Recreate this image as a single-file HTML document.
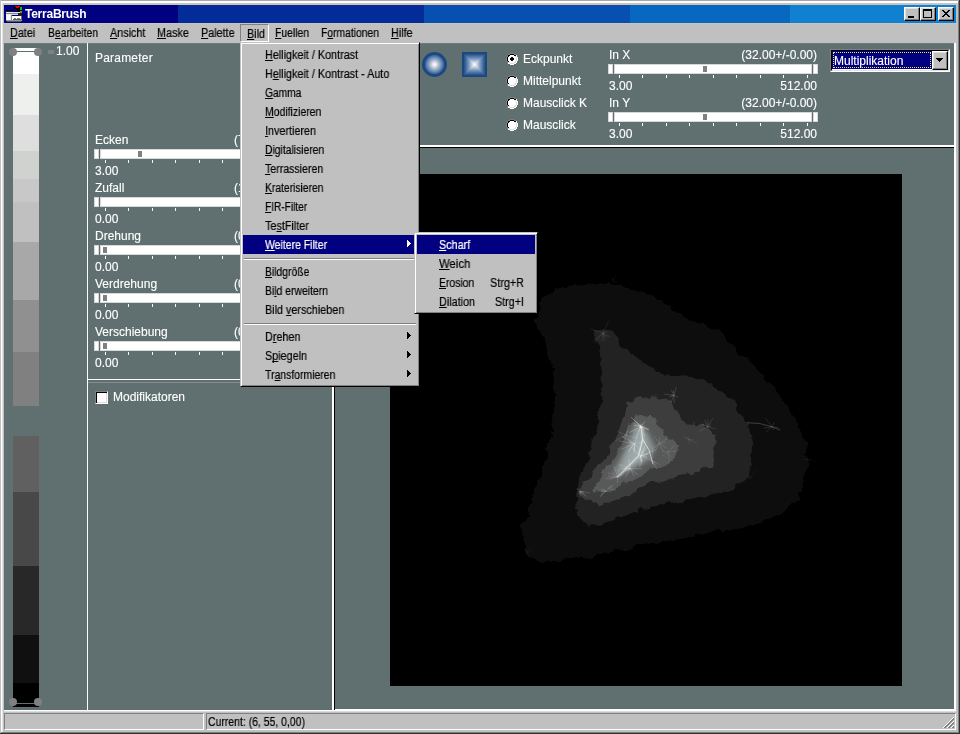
<!DOCTYPE html>
<html lang="de"><head><meta charset="utf-8"><title>TerraBrush</title>
<style>
html,body{margin:0;padding:0}
body{width:960px;height:734px;overflow:hidden;position:relative;background:#c0c0c0;font-family:"Liberation Sans",sans-serif;font-size:12px;color:#000}
div,span{position:absolute;box-sizing:border-box;white-space:nowrap}
.bg{background:#607070}
.t{color:#fff;font-size:12px;line-height:14px;height:14px;-webkit-text-stroke:.12px #fff;will-change:transform}
.r{text-align:right}
.m{font-size:12px;line-height:14px;height:14px;color:#000;transform:scaleX(.9);transform-origin:0 0;will-change:transform;-webkit-text-stroke:.2px}
.m u{text-decoration:underline;text-underline-offset:1px;text-decoration-thickness:1px;text-decoration-skip-ink:none}
.mw{color:#fff}
.mr{transform-origin:100% 0;text-align:right}
.trk{background:#fff;border:1px solid #d4d8d8;height:10px}
.tick{width:1px;height:3px;background:#fff}
.thumb{width:4px;height:6px;background:#808080}
.btn{background:#c0c0c0;border:1px solid;border-color:#fff #000 #000 #fff;box-shadow:inset -1px -1px 0 #808080,inset 1px 1px 0 #dfdfdf}
.radio{width:12px;height:12px;border-radius:50%;background:#fff;box-shadow:inset 1px 1px 0 1px #404040, inset -1px -1px 0 0 #dfdfdf;border:0}
</style></head><body>

<div style="left:0px;top:0px;width:960px;height:1px;background:#a8a8a8"></div>
<div style="left:0px;top:1px;width:959px;height:2px;background:#fff"></div>
<div style="left:0px;top:2px;width:959px;height:1px;background:#fff"></div>
<div style="left:0px;top:3px;width:959px;height:2px;background:#c8c4c0"></div>
<div style="left:0px;top:0px;width:1px;height:734px;background:#c0c0c0"></div>
<div style="left:1px;top:1px;width:1px;height:731px;background:#fff"></div>
<div style="left:2px;top:2px;width:1px;height:730px;background:#e4e4e4"></div>
<div style="left:958px;top:1px;width:1px;height:732px;background:#808080"></div>
<div style="left:959px;top:0px;width:1px;height:734px;background:#303030"></div>
<div style="left:1px;top:732px;width:958px;height:1px;background:#808080"></div>
<div style="left:0px;top:733px;width:960px;height:1px;background:#303030"></div>
<div style="left:4px;top:5px;width:174px;height:18px;background:#000080"></div>
<div style="left:178px;top:5px;width:246px;height:18px;background:#042c98"></div>
<div style="left:424px;top:5px;width:206px;height:18px;background:#0850b0"></div>
<div style="left:630px;top:5px;width:160px;height:18px;background:#0868c0"></div>
<div style="left:790px;top:5px;width:166px;height:18px;background:#1080d0"></div>
<div style="left:4px;top:23px;width:952px;height:1px;background:#c8c4c0"></div>
<svg style="position:absolute;left:6px;top:6px" width="16" height="16" viewBox="0 0 16 16" shape-rendering="crispEdges">
<rect x="8" y="0" width="6" height="3" fill="#000"/>
<rect x="11" y="2" width="3" height="4" fill="#000"/>
<rect x="9" y="0" width="5" height="1" fill="#e80000"/>
<rect x="10" y="1" width="3" height="1" fill="#e80000"/>
<rect x="14" y="1" width="2" height="3" fill="#00c800"/>
<rect x="14" y="4" width="2" height="1" fill="#000"/>
<rect x="14" y="5" width="2" height="2" fill="#8a8428"/>
<rect x="0" y="4" width="8" height="1" fill="#000"/>
<rect x="0" y="5" width="8" height="1" fill="#101060"/>
<rect x="0" y="6" width="14" height="1" fill="#e4e4e4"/>
<rect x="0" y="7" width="14" height="1" fill="#80908c"/>
<rect x="0" y="8" width="16" height="7" fill="#d4d8d4"/>
<rect x="12" y="7" width="4" height="3" fill="#202020"/>
<rect x="0" y="8" width="5" height="6" fill="#e8e8e8"/>
<rect x="1" y="9" width="3" height="5" fill="#f8f8f8"/>
<rect x="5" y="9" width="1" height="6" fill="#909090"/>
<rect x="6" y="9" width="7" height="1" fill="#000080"/>
<rect x="6" y="10" width="10" height="4" fill="#fff"/>
<rect x="8" y="12" width="2" height="1" fill="#808080"/>
<rect x="11" y="12" width="3" height="1" fill="#808080"/>
<rect x="7" y="13" width="8" height="1" fill="#585858"/>
<rect x="15" y="10" width="1" height="5" fill="#707058"/>
<rect x="0" y="14" width="16" height="1" fill="#90a098"/>
<rect x="1" y="15" width="14" height="1" fill="#485868"/>
</svg>
<div style="left:25px;top:6px;color:#fff;font-weight:bold;font-size:12px;letter-spacing:-.25px;line-height:16px;height:16px;will-change:transform">TerraBrush</div>
<div class="btn" style="left:904px;top:7px;width:16px;height:14px;"><div style="left:3px;top:8px;width:6px;height:2px;background:#000"></div></div>
<div class="btn" style="left:920px;top:7px;width:16px;height:14px;"><div style="left:2px;top:1px;width:9px;height:9px;border:1px solid #000;border-top-width:2px"></div></div>
<div class="btn" style="left:938px;top:7px;width:16px;height:14px"><svg style="position:absolute;left:3px;top:2px" width="8" height="7" viewBox="0 0 8 7" shape-rendering="crispEdges"><path d="M0 0h2v1h1v1h2v-1h1v-1h2v1h-1v1h-1v1h-1v1h1v1h1v1h1v1h-2v-1h-1v-1h-2v1h-1v1h-2v-1h1v-1h1v-1h1v-1h-1v-1h-1v-1h-1z" fill="#000"/></svg></div>
<div style="left:240px;top:24px;width:29px;height:18px;border:1px solid;border-color:#808080 #fff #fff #808080"></div>
<div class="m" style="left:10px;top:26px"><u>D</u>atei</div>
<div class="m" style="left:48px;top:26px;transform:scaleX(0.8604)">B<u>e</u>arbeiten</div>
<div class="m" style="left:110px;top:26px"><u>A</u>nsicht</div>
<div class="m" style="left:157px;top:26px"><u>M</u>aske</div>
<div class="m" style="left:201px;top:26px"><u>P</u>alette</div>
<div class="m" style="left:247px;top:27px"><u>B</u>ild</div>
<div class="m" style="left:275px;top:26px;transform:scaleX(0.8644)"><u>F</u>uellen</div>
<div class="m" style="left:321px;top:26px;transform:scaleX(0.8600)">F<u>o</u>rmationen</div>
<div class="m" style="left:391px;top:26px"><u>H</u>ilfe</div>
<div class="bg" style="left:4px;top:43px;width:84px;height:669px;"></div>
<div style="left:4px;top:43px;width:83px;height:1px;background:#6c7c7c"></div>
<div style="left:87px;top:43px;width:1px;height:669px;background:#fff"></div>
<div class="bg" style="left:88px;top:43px;width:246px;height:669px;"></div>
<div style="left:88px;top:43px;width:244px;height:1px;background:#6c7c7c"></div>
<div style="left:88px;top:379px;width:244px;height:1px;background:#fff"></div>
<div style="left:88px;top:382px;width:244px;height:1px;background:#848e8e"></div>
<div style="left:332px;top:43px;width:2px;height:669px;background:#fff"></div>
<div style="left:334px;top:43px;width:1px;height:669px;background:#000"></div>
<div class="bg" style="left:335px;top:43px;width:621px;height:669px;"></div>
<div style="left:335px;top:43px;width:619px;height:1px;background:#6c7c7c"></div>
<div style="left:335px;top:145px;width:619px;height:2px;background:#fff"></div>
<div style="left:335px;top:147px;width:619px;height:1px;background:#000"></div>
<div style="left:954px;top:43px;width:2px;height:669px;background:#fff"></div>
<div style="left:4px;top:710px;width:952px;height:1px;background:#fff"></div>
<div style="left:4px;top:711px;width:952px;height:1px;background:#dcdcdc"></div>
<div style="left:335px;top:709px;width:621px;height:1px;background:#fff"></div>
<div style="left:13px;top:48px;width:26px;height:26px;background:#ffffff"></div>
<div style="left:13px;top:74px;width:26px;height:41px;background:#eef0ee"></div>
<div style="left:13px;top:115px;width:26px;height:36px;background:#dedede"></div>
<div style="left:13px;top:151px;width:26px;height:28px;background:#d0d2d0"></div>
<div style="left:13px;top:179px;width:26px;height:23px;background:#c8c8c8"></div>
<div style="left:13px;top:202px;width:26px;height:40px;background:#c0c0c0"></div>
<div style="left:13px;top:242px;width:26px;height:58px;background:#a8a8a8"></div>
<div style="left:13px;top:300px;width:26px;height:52px;background:#909090"></div>
<div style="left:13px;top:352px;width:26px;height:54px;background:#808080"></div>
<div style="left:13px;top:436px;width:26px;height:56px;background:#606060"></div>
<div style="left:13px;top:492px;width:26px;height:74px;background:#484848"></div>
<div style="left:13px;top:566px;width:26px;height:69px;background:#282828"></div>
<div style="left:13px;top:635px;width:26px;height:48px;background:#101010"></div>
<div style="left:13px;top:683px;width:26px;height:24px;background:#000000"></div>
<div class="bg" style="left:13px;top:51px;width:26px;height:1px;"></div>
<div class="bg" style="left:13px;top:703px;width:26px;height:1px;"></div>
<div style="left:9px;top:48px;width:8px;height:8px;background:#808080;border-radius:50%"></div>
<div style="left:34px;top:48px;width:8px;height:8px;background:#808080;border-radius:50%"></div>
<div style="left:9px;top:698px;width:8px;height:8px;background:#808080;border-radius:50%"></div>
<div style="left:34px;top:698px;width:8px;height:8px;background:#808080;border-radius:50%"></div>
<div style="left:48px;top:50px;width:6px;height:4px;background:#808080"></div>
<div class="t" style="left:56px;top:44px">1.00</div>
<div class="t" style="left:95px;top:51px;letter-spacing:.2px">Parameter</div>
<div class="t" style="left:95px;top:133px">Ecken</div>
<div class="trk" style="left:94px;top:149px;width:5px;height:10px;"></div>
<div class="trk" style="left:100px;top:149px;width:220px;height:10px;"></div>
<div class="trk" style="left:321px;top:149px;width:5px;height:10px;"></div>
<div class="thumb" style="left:138px;top:151px;width:4px;height:6px;"></div>
<div class="tick" style="left:105px;top:160px;width:1px;height:3px;"></div>
<div class="tick" style="left:128px;top:160px;width:1px;height:3px;"></div>
<div class="tick" style="left:152px;top:160px;width:1px;height:3px;"></div>
<div class="tick" style="left:175px;top:160px;width:1px;height:3px;"></div>
<div class="tick" style="left:199px;top:160px;width:1px;height:3px;"></div>
<div class="tick" style="left:222px;top:160px;width:1px;height:3px;"></div>
<div class="tick" style="left:246px;top:160px;width:1px;height:3px;"></div>
<div class="tick" style="left:269px;top:160px;width:1px;height:3px;"></div>
<div class="tick" style="left:293px;top:160px;width:1px;height:3px;"></div>
<div class="t" style="left:95px;top:164px">3.00</div>
<div class="t" style="left:234px;top:133px">(7</div>
<div class="t" style="left:95px;top:181px">Zufall</div>
<div class="trk" style="left:94px;top:197px;width:5px;height:10px;"></div>
<div class="trk" style="left:100px;top:197px;width:220px;height:10px;"></div>
<div class="trk" style="left:321px;top:197px;width:5px;height:10px;"></div>
<div class="tick" style="left:105px;top:208px;width:1px;height:3px;"></div>
<div class="tick" style="left:128px;top:208px;width:1px;height:3px;"></div>
<div class="tick" style="left:152px;top:208px;width:1px;height:3px;"></div>
<div class="tick" style="left:175px;top:208px;width:1px;height:3px;"></div>
<div class="tick" style="left:199px;top:208px;width:1px;height:3px;"></div>
<div class="tick" style="left:222px;top:208px;width:1px;height:3px;"></div>
<div class="tick" style="left:246px;top:208px;width:1px;height:3px;"></div>
<div class="tick" style="left:269px;top:208px;width:1px;height:3px;"></div>
<div class="tick" style="left:293px;top:208px;width:1px;height:3px;"></div>
<div class="t" style="left:95px;top:212px">0.00</div>
<div class="t" style="left:234px;top:181px">(1</div>
<div class="t" style="left:95px;top:229px">Drehung</div>
<div class="trk" style="left:94px;top:245px;width:5px;height:10px;"></div>
<div class="trk" style="left:100px;top:245px;width:220px;height:10px;"></div>
<div class="trk" style="left:321px;top:245px;width:5px;height:10px;"></div>
<div class="thumb" style="left:103px;top:247px;width:4px;height:6px;"></div>
<div class="tick" style="left:105px;top:256px;width:1px;height:3px;"></div>
<div class="tick" style="left:128px;top:256px;width:1px;height:3px;"></div>
<div class="tick" style="left:152px;top:256px;width:1px;height:3px;"></div>
<div class="tick" style="left:175px;top:256px;width:1px;height:3px;"></div>
<div class="tick" style="left:199px;top:256px;width:1px;height:3px;"></div>
<div class="tick" style="left:222px;top:256px;width:1px;height:3px;"></div>
<div class="tick" style="left:246px;top:256px;width:1px;height:3px;"></div>
<div class="tick" style="left:269px;top:256px;width:1px;height:3px;"></div>
<div class="tick" style="left:293px;top:256px;width:1px;height:3px;"></div>
<div class="t" style="left:95px;top:260px">0.00</div>
<div class="t" style="left:234px;top:229px">(0</div>
<div class="t" style="left:95px;top:277px">Verdrehung</div>
<div class="trk" style="left:94px;top:293px;width:5px;height:10px;"></div>
<div class="trk" style="left:100px;top:293px;width:220px;height:10px;"></div>
<div class="trk" style="left:321px;top:293px;width:5px;height:10px;"></div>
<div class="thumb" style="left:103px;top:295px;width:4px;height:6px;"></div>
<div class="tick" style="left:105px;top:304px;width:1px;height:3px;"></div>
<div class="tick" style="left:128px;top:304px;width:1px;height:3px;"></div>
<div class="tick" style="left:152px;top:304px;width:1px;height:3px;"></div>
<div class="tick" style="left:175px;top:304px;width:1px;height:3px;"></div>
<div class="tick" style="left:199px;top:304px;width:1px;height:3px;"></div>
<div class="tick" style="left:222px;top:304px;width:1px;height:3px;"></div>
<div class="tick" style="left:246px;top:304px;width:1px;height:3px;"></div>
<div class="tick" style="left:269px;top:304px;width:1px;height:3px;"></div>
<div class="tick" style="left:293px;top:304px;width:1px;height:3px;"></div>
<div class="t" style="left:95px;top:308px">0.00</div>
<div class="t" style="left:234px;top:277px">(0</div>
<div class="t" style="left:95px;top:325px">Verschiebung</div>
<div class="trk" style="left:94px;top:341px;width:5px;height:10px;"></div>
<div class="trk" style="left:100px;top:341px;width:220px;height:10px;"></div>
<div class="trk" style="left:321px;top:341px;width:5px;height:10px;"></div>
<div class="thumb" style="left:103px;top:343px;width:4px;height:6px;"></div>
<div class="tick" style="left:105px;top:352px;width:1px;height:3px;"></div>
<div class="tick" style="left:128px;top:352px;width:1px;height:3px;"></div>
<div class="tick" style="left:152px;top:352px;width:1px;height:3px;"></div>
<div class="tick" style="left:175px;top:352px;width:1px;height:3px;"></div>
<div class="tick" style="left:199px;top:352px;width:1px;height:3px;"></div>
<div class="tick" style="left:222px;top:352px;width:1px;height:3px;"></div>
<div class="tick" style="left:246px;top:352px;width:1px;height:3px;"></div>
<div class="tick" style="left:269px;top:352px;width:1px;height:3px;"></div>
<div class="tick" style="left:293px;top:352px;width:1px;height:3px;"></div>
<div class="t" style="left:95px;top:356px">0.00</div>
<div class="t" style="left:234px;top:325px">(0</div>
<div class="t" style="left:609px;top:48px">In X</div>
<div class="t r" style="left:697px;width:120px;top:48px">(32.00+/-0.00)</div>
<div class="trk" style="left:608px;top:64px;width:5px;height:10px;"></div>
<div class="trk" style="left:614px;top:64px;width:198px;height:10px;"></div>
<div class="trk" style="left:813px;top:64px;width:5px;height:10px;"></div>
<div class="thumb" style="left:703px;top:66px;width:4px;height:6px;"></div>
<div class="tick" style="left:619px;top:75px;width:1px;height:3px;"></div>
<div class="tick" style="left:642px;top:75px;width:1px;height:3px;"></div>
<div class="tick" style="left:666px;top:75px;width:1px;height:3px;"></div>
<div class="tick" style="left:689px;top:75px;width:1px;height:3px;"></div>
<div class="tick" style="left:713px;top:75px;width:1px;height:3px;"></div>
<div class="tick" style="left:736px;top:75px;width:1px;height:3px;"></div>
<div class="tick" style="left:760px;top:75px;width:1px;height:3px;"></div>
<div class="tick" style="left:783px;top:75px;width:1px;height:3px;"></div>
<div class="tick" style="left:807px;top:75px;width:1px;height:3px;"></div>
<div class="t" style="left:609px;top:79px">3.00</div>
<div class="t r" style="left:697px;width:120px;top:79px">512.00</div>
<div class="t" style="left:609px;top:96px">In Y</div>
<div class="t r" style="left:697px;width:120px;top:96px">(32.00+/-0.00)</div>
<div class="trk" style="left:608px;top:112px;width:5px;height:10px;"></div>
<div class="trk" style="left:614px;top:112px;width:198px;height:10px;"></div>
<div class="trk" style="left:813px;top:112px;width:5px;height:10px;"></div>
<div class="thumb" style="left:703px;top:114px;width:4px;height:6px;"></div>
<div class="tick" style="left:619px;top:123px;width:1px;height:3px;"></div>
<div class="tick" style="left:642px;top:123px;width:1px;height:3px;"></div>
<div class="tick" style="left:666px;top:123px;width:1px;height:3px;"></div>
<div class="tick" style="left:689px;top:123px;width:1px;height:3px;"></div>
<div class="tick" style="left:713px;top:123px;width:1px;height:3px;"></div>
<div class="tick" style="left:736px;top:123px;width:1px;height:3px;"></div>
<div class="tick" style="left:760px;top:123px;width:1px;height:3px;"></div>
<div class="tick" style="left:783px;top:123px;width:1px;height:3px;"></div>
<div class="tick" style="left:807px;top:123px;width:1px;height:3px;"></div>
<div class="t" style="left:609px;top:127px">3.00</div>
<div class="t r" style="left:697px;width:120px;top:127px">512.00</div>
<div style="left:95px;top:391px;width:13px;height:13px;background:#fff;border:1px solid;border-color:#808080 #fff #fff #808080;box-shadow:inset 1px 1px 0 #000, inset -1px -1px 0 #dcdcdc"></div>
<div class="t" style="left:113px;top:390px">Modifikatoren</div>
<svg style="position:absolute;left:421px;top:51px" width="27" height="27" viewBox="0 0 27 27">
<defs><radialGradient id="rg" cx="50%" cy="50%" r="50%"><stop offset="0" stop-color="#fff"/><stop offset="0.14" stop-color="#e8e8ec"/><stop offset="0.35" stop-color="#a8b8d0"/><stop offset="0.55" stop-color="#7090b8"/><stop offset="0.74" stop-color="#3c6498"/><stop offset="0.8" stop-color="#1c4880"/><stop offset="1" stop-color="#1c4880"/></radialGradient></defs>
<circle cx="13.5" cy="13.5" r="12.5" fill="url(#rg)"/></svg>
<svg style="position:absolute;left:462px;top:52px" width="25" height="25" viewBox="0 0 25 25" shape-rendering="crispEdges"><rect x="0" y="0" width="25" height="25" fill="#1c4880"/><rect x="1" y="1" width="23" height="23" fill="#1c4880"/><rect x="2" y="2" width="21" height="21" fill="#2c5890"/><rect x="3" y="3" width="19" height="19" fill="#3c6498"/><rect x="4" y="4" width="17" height="17" fill="#4c74a4"/><rect x="5" y="5" width="15" height="15" fill="#6084b0"/><rect x="6" y="6" width="13" height="13" fill="#7494bc"/><rect x="7" y="7" width="11" height="11" fill="#8ca4c4"/><rect x="8" y="8" width="9" height="9" fill="#a4b8d0"/><rect x="9" y="9" width="7" height="7" fill="#bcc8dc"/><rect x="10" y="10" width="5" height="5" fill="#d4dce8"/><rect x="11" y="11" width="3" height="3" fill="#e8ecf0"/><rect x="12" y="12" width="1" height="1" fill="#ffffff"/></svg>
<svg style="position:absolute;left:506px;top:53px" width="12" height="12" viewBox="0 0 12 12" shape-rendering="crispEdges"><rect x="4" y="0" width="4" height="1" fill="#808080"/><rect x="2" y="1" width="2" height="1" fill="#808080"/><rect x="8" y="1" width="2" height="1" fill="#808080"/><rect x="4" y="1" width="4" height="1" fill="#000"/><rect x="1" y="2" width="1" height="1" fill="#808080"/><rect x="2" y="2" width="2" height="1" fill="#000"/><rect x="4" y="2" width="4" height="1" fill="#fff"/><rect x="8" y="2" width="2" height="1" fill="#000"/><rect x="10" y="2" width="1" height="1" fill="#fff"/><rect x="1" y="3" width="1" height="1" fill="#808080"/><rect x="2" y="3" width="1" height="1" fill="#000"/><rect x="3" y="3" width="6" height="1" fill="#fff"/><rect x="9" y="3" width="1" height="1" fill="#dcdcdc"/><rect x="10" y="3" width="1" height="1" fill="#fff"/><rect x="0" y="4" width="1" height="1" fill="#808080"/><rect x="1" y="4" width="1" height="1" fill="#000"/><rect x="2" y="4" width="8" height="1" fill="#fff"/><rect x="10" y="4" width="1" height="1" fill="#dcdcdc"/><rect x="11" y="4" width="1" height="1" fill="#fff"/><rect x="0" y="5" width="1" height="1" fill="#808080"/><rect x="1" y="5" width="1" height="1" fill="#000"/><rect x="2" y="5" width="8" height="1" fill="#fff"/><rect x="10" y="5" width="1" height="1" fill="#dcdcdc"/><rect x="11" y="5" width="1" height="1" fill="#fff"/><rect x="0" y="6" width="1" height="1" fill="#808080"/><rect x="1" y="6" width="1" height="1" fill="#000"/><rect x="2" y="6" width="8" height="1" fill="#fff"/><rect x="10" y="6" width="1" height="1" fill="#dcdcdc"/><rect x="11" y="6" width="1" height="1" fill="#fff"/><rect x="0" y="7" width="1" height="1" fill="#808080"/><rect x="1" y="7" width="1" height="1" fill="#000"/><rect x="2" y="7" width="8" height="1" fill="#fff"/><rect x="10" y="7" width="1" height="1" fill="#dcdcdc"/><rect x="11" y="7" width="1" height="1" fill="#fff"/><rect x="1" y="8" width="1" height="1" fill="#808080"/><rect x="2" y="8" width="1" height="1" fill="#000"/><rect x="3" y="8" width="6" height="1" fill="#fff"/><rect x="9" y="8" width="1" height="1" fill="#dcdcdc"/><rect x="10" y="8" width="1" height="1" fill="#fff"/><rect x="1" y="9" width="1" height="1" fill="#808080"/><rect x="2" y="9" width="2" height="1" fill="#dcdcdc"/><rect x="4" y="9" width="4" height="1" fill="#fff"/><rect x="8" y="9" width="2" height="1" fill="#dcdcdc"/><rect x="10" y="9" width="1" height="1" fill="#fff"/><rect x="2" y="10" width="2" height="1" fill="#fff"/><rect x="4" y="10" width="4" height="1" fill="#dcdcdc"/><rect x="8" y="10" width="2" height="1" fill="#fff"/><rect x="4" y="11" width="4" height="1" fill="#fff"/><rect x="5" y="4" width="2" height="1" fill="#000"/><rect x="4" y="5" width="4" height="1" fill="#000"/><rect x="4" y="6" width="4" height="1" fill="#000"/><rect x="5" y="7" width="2" height="1" fill="#000"/></svg>
<div class="t" style="left:523px;top:52px">Eckpunkt</div>
<svg style="position:absolute;left:506px;top:75px" width="12" height="12" viewBox="0 0 12 12" shape-rendering="crispEdges"><rect x="4" y="0" width="4" height="1" fill="#808080"/><rect x="2" y="1" width="2" height="1" fill="#808080"/><rect x="8" y="1" width="2" height="1" fill="#808080"/><rect x="4" y="1" width="4" height="1" fill="#000"/><rect x="1" y="2" width="1" height="1" fill="#808080"/><rect x="2" y="2" width="2" height="1" fill="#000"/><rect x="4" y="2" width="4" height="1" fill="#fff"/><rect x="8" y="2" width="2" height="1" fill="#000"/><rect x="10" y="2" width="1" height="1" fill="#fff"/><rect x="1" y="3" width="1" height="1" fill="#808080"/><rect x="2" y="3" width="1" height="1" fill="#000"/><rect x="3" y="3" width="6" height="1" fill="#fff"/><rect x="9" y="3" width="1" height="1" fill="#dcdcdc"/><rect x="10" y="3" width="1" height="1" fill="#fff"/><rect x="0" y="4" width="1" height="1" fill="#808080"/><rect x="1" y="4" width="1" height="1" fill="#000"/><rect x="2" y="4" width="8" height="1" fill="#fff"/><rect x="10" y="4" width="1" height="1" fill="#dcdcdc"/><rect x="11" y="4" width="1" height="1" fill="#fff"/><rect x="0" y="5" width="1" height="1" fill="#808080"/><rect x="1" y="5" width="1" height="1" fill="#000"/><rect x="2" y="5" width="8" height="1" fill="#fff"/><rect x="10" y="5" width="1" height="1" fill="#dcdcdc"/><rect x="11" y="5" width="1" height="1" fill="#fff"/><rect x="0" y="6" width="1" height="1" fill="#808080"/><rect x="1" y="6" width="1" height="1" fill="#000"/><rect x="2" y="6" width="8" height="1" fill="#fff"/><rect x="10" y="6" width="1" height="1" fill="#dcdcdc"/><rect x="11" y="6" width="1" height="1" fill="#fff"/><rect x="0" y="7" width="1" height="1" fill="#808080"/><rect x="1" y="7" width="1" height="1" fill="#000"/><rect x="2" y="7" width="8" height="1" fill="#fff"/><rect x="10" y="7" width="1" height="1" fill="#dcdcdc"/><rect x="11" y="7" width="1" height="1" fill="#fff"/><rect x="1" y="8" width="1" height="1" fill="#808080"/><rect x="2" y="8" width="1" height="1" fill="#000"/><rect x="3" y="8" width="6" height="1" fill="#fff"/><rect x="9" y="8" width="1" height="1" fill="#dcdcdc"/><rect x="10" y="8" width="1" height="1" fill="#fff"/><rect x="1" y="9" width="1" height="1" fill="#808080"/><rect x="2" y="9" width="2" height="1" fill="#dcdcdc"/><rect x="4" y="9" width="4" height="1" fill="#fff"/><rect x="8" y="9" width="2" height="1" fill="#dcdcdc"/><rect x="10" y="9" width="1" height="1" fill="#fff"/><rect x="2" y="10" width="2" height="1" fill="#fff"/><rect x="4" y="10" width="4" height="1" fill="#dcdcdc"/><rect x="8" y="10" width="2" height="1" fill="#fff"/><rect x="4" y="11" width="4" height="1" fill="#fff"/></svg>
<div class="t" style="left:523px;top:74px">Mittelpunkt</div>
<svg style="position:absolute;left:506px;top:97px" width="12" height="12" viewBox="0 0 12 12" shape-rendering="crispEdges"><rect x="4" y="0" width="4" height="1" fill="#808080"/><rect x="2" y="1" width="2" height="1" fill="#808080"/><rect x="8" y="1" width="2" height="1" fill="#808080"/><rect x="4" y="1" width="4" height="1" fill="#000"/><rect x="1" y="2" width="1" height="1" fill="#808080"/><rect x="2" y="2" width="2" height="1" fill="#000"/><rect x="4" y="2" width="4" height="1" fill="#fff"/><rect x="8" y="2" width="2" height="1" fill="#000"/><rect x="10" y="2" width="1" height="1" fill="#fff"/><rect x="1" y="3" width="1" height="1" fill="#808080"/><rect x="2" y="3" width="1" height="1" fill="#000"/><rect x="3" y="3" width="6" height="1" fill="#fff"/><rect x="9" y="3" width="1" height="1" fill="#dcdcdc"/><rect x="10" y="3" width="1" height="1" fill="#fff"/><rect x="0" y="4" width="1" height="1" fill="#808080"/><rect x="1" y="4" width="1" height="1" fill="#000"/><rect x="2" y="4" width="8" height="1" fill="#fff"/><rect x="10" y="4" width="1" height="1" fill="#dcdcdc"/><rect x="11" y="4" width="1" height="1" fill="#fff"/><rect x="0" y="5" width="1" height="1" fill="#808080"/><rect x="1" y="5" width="1" height="1" fill="#000"/><rect x="2" y="5" width="8" height="1" fill="#fff"/><rect x="10" y="5" width="1" height="1" fill="#dcdcdc"/><rect x="11" y="5" width="1" height="1" fill="#fff"/><rect x="0" y="6" width="1" height="1" fill="#808080"/><rect x="1" y="6" width="1" height="1" fill="#000"/><rect x="2" y="6" width="8" height="1" fill="#fff"/><rect x="10" y="6" width="1" height="1" fill="#dcdcdc"/><rect x="11" y="6" width="1" height="1" fill="#fff"/><rect x="0" y="7" width="1" height="1" fill="#808080"/><rect x="1" y="7" width="1" height="1" fill="#000"/><rect x="2" y="7" width="8" height="1" fill="#fff"/><rect x="10" y="7" width="1" height="1" fill="#dcdcdc"/><rect x="11" y="7" width="1" height="1" fill="#fff"/><rect x="1" y="8" width="1" height="1" fill="#808080"/><rect x="2" y="8" width="1" height="1" fill="#000"/><rect x="3" y="8" width="6" height="1" fill="#fff"/><rect x="9" y="8" width="1" height="1" fill="#dcdcdc"/><rect x="10" y="8" width="1" height="1" fill="#fff"/><rect x="1" y="9" width="1" height="1" fill="#808080"/><rect x="2" y="9" width="2" height="1" fill="#dcdcdc"/><rect x="4" y="9" width="4" height="1" fill="#fff"/><rect x="8" y="9" width="2" height="1" fill="#dcdcdc"/><rect x="10" y="9" width="1" height="1" fill="#fff"/><rect x="2" y="10" width="2" height="1" fill="#fff"/><rect x="4" y="10" width="4" height="1" fill="#dcdcdc"/><rect x="8" y="10" width="2" height="1" fill="#fff"/><rect x="4" y="11" width="4" height="1" fill="#fff"/></svg>
<div class="t" style="left:523px;top:96px">Mausclick K</div>
<svg style="position:absolute;left:506px;top:119px" width="12" height="12" viewBox="0 0 12 12" shape-rendering="crispEdges"><rect x="4" y="0" width="4" height="1" fill="#808080"/><rect x="2" y="1" width="2" height="1" fill="#808080"/><rect x="8" y="1" width="2" height="1" fill="#808080"/><rect x="4" y="1" width="4" height="1" fill="#000"/><rect x="1" y="2" width="1" height="1" fill="#808080"/><rect x="2" y="2" width="2" height="1" fill="#000"/><rect x="4" y="2" width="4" height="1" fill="#fff"/><rect x="8" y="2" width="2" height="1" fill="#000"/><rect x="10" y="2" width="1" height="1" fill="#fff"/><rect x="1" y="3" width="1" height="1" fill="#808080"/><rect x="2" y="3" width="1" height="1" fill="#000"/><rect x="3" y="3" width="6" height="1" fill="#fff"/><rect x="9" y="3" width="1" height="1" fill="#dcdcdc"/><rect x="10" y="3" width="1" height="1" fill="#fff"/><rect x="0" y="4" width="1" height="1" fill="#808080"/><rect x="1" y="4" width="1" height="1" fill="#000"/><rect x="2" y="4" width="8" height="1" fill="#fff"/><rect x="10" y="4" width="1" height="1" fill="#dcdcdc"/><rect x="11" y="4" width="1" height="1" fill="#fff"/><rect x="0" y="5" width="1" height="1" fill="#808080"/><rect x="1" y="5" width="1" height="1" fill="#000"/><rect x="2" y="5" width="8" height="1" fill="#fff"/><rect x="10" y="5" width="1" height="1" fill="#dcdcdc"/><rect x="11" y="5" width="1" height="1" fill="#fff"/><rect x="0" y="6" width="1" height="1" fill="#808080"/><rect x="1" y="6" width="1" height="1" fill="#000"/><rect x="2" y="6" width="8" height="1" fill="#fff"/><rect x="10" y="6" width="1" height="1" fill="#dcdcdc"/><rect x="11" y="6" width="1" height="1" fill="#fff"/><rect x="0" y="7" width="1" height="1" fill="#808080"/><rect x="1" y="7" width="1" height="1" fill="#000"/><rect x="2" y="7" width="8" height="1" fill="#fff"/><rect x="10" y="7" width="1" height="1" fill="#dcdcdc"/><rect x="11" y="7" width="1" height="1" fill="#fff"/><rect x="1" y="8" width="1" height="1" fill="#808080"/><rect x="2" y="8" width="1" height="1" fill="#000"/><rect x="3" y="8" width="6" height="1" fill="#fff"/><rect x="9" y="8" width="1" height="1" fill="#dcdcdc"/><rect x="10" y="8" width="1" height="1" fill="#fff"/><rect x="1" y="9" width="1" height="1" fill="#808080"/><rect x="2" y="9" width="2" height="1" fill="#dcdcdc"/><rect x="4" y="9" width="4" height="1" fill="#fff"/><rect x="8" y="9" width="2" height="1" fill="#dcdcdc"/><rect x="10" y="9" width="1" height="1" fill="#fff"/><rect x="2" y="10" width="2" height="1" fill="#fff"/><rect x="4" y="10" width="4" height="1" fill="#dcdcdc"/><rect x="8" y="10" width="2" height="1" fill="#fff"/><rect x="4" y="11" width="4" height="1" fill="#fff"/></svg>
<div class="t" style="left:523px;top:118px">Mausclick</div>
<div style="left:830px;top:49px;width:120px;height:23px;background:#fff;border:1px solid;border-color:#808080 #fff #fff #808080"></div>
<div style="left:831px;top:50px;width:118px;height:21px;border:1px solid;border-color:#000 #e0e0e0 #e0e0e0 #000"></div>
<div style="left:832px;top:51px;width:100px;height:18px;background:#000080"></div>
<div style="left:833px;top:52px;width:98px;height:16px;border:1px dotted #e8e860"></div>
<div class="t" style="left:834px;top:54px">Multiplikation</div>
<div class="btn" style="left:932px;top:51px;width:16px;height:19px;"><svg style="position:absolute;left:3px;top:6px" width="7" height="4" viewBox="0 0 7 4" shape-rendering="crispEdges"><path d="M0 0h7v1h-1v1h-1v1h-1v1h-1v-1h-1v-1h-1v-1h-1z"/></svg></div>
<div id="img" style="left:390px;top:174px;width:512px;height:512px;background:#000;overflow:hidden">
<svg style="position:absolute;left:0;top:0" width="512" height="512" viewBox="0 0 512 512">
<defs><filter id="b1" x="-10%" y="-10%" width="120%" height="120%"><feTurbulence type="fractalNoise" baseFrequency="0.09" numOctaves="3" seed="4" result="n"/><feDisplacementMap in="SourceGraphic" in2="n" scale="9" xChannelSelector="R" yChannelSelector="G"/><feGaussianBlur stdDeviation="0.7"/></filter><filter id="b3" x="-10%" y="-10%" width="120%" height="120%"><feGaussianBlur stdDeviation="1.2"/></filter><filter id="b2" x="-20%" y="-20%" width="140%" height="140%"><feGaussianBlur stdDeviation="2.5"/></filter></defs>
<polygon points="128.2,115.9 133.2,98.4 158.2,85.9 208.3,80.9 248.3,88.4 278.3,103.4 308.4,125.9 348.4,140.9 378.5,173.5 408.5,203.5 433.5,238.5 448.5,273.6 451.0,303.6 443.5,333.6 418.5,358.7 378.5,373.7 328.4,381.2 278.3,391.2 228.3,401.2 173.2,411.2 133.2,416.2 113.2,403.7 108.2,378.7 118.2,343.7 133.2,303.6 143.2,263.6 148.2,223.5 145.7,183.5 135.7,148.5 123.2,128.4" fill="#060606" filter="url(#b1)"/>
<polygon points="148.4,138.1 152.6,123.5 173.4,113.1 215.1,108.9 248.5,115.2 273.5,127.7 298.6,146.5 331.9,159.0 356.9,186.1 382.0,211.1 402.8,240.3 415.3,269.5 417.4,294.6 411.2,319.6 390.3,340.4 356.9,352.9 315.2,359.2 273.5,367.5 231.8,375.9 185.9,384.2 152.6,388.4 135.9,378.0 131.7,357.1 140.1,327.9 152.6,294.6 160.9,261.2 165.1,227.8 163.0,194.4 154.7,165.2 144.2,148.6" fill="#101010" filter="url(#b1)"/>
<polygon points="202.6,156.9 219.3,154.8 231.8,171.5 252.7,188.2 273.5,200.7 306.9,204.9 323.6,211.1 344.4,227.8 356.9,248.7 361.1,273.7 359.0,302.9 340.3,315.4 306.9,323.7 273.5,330.0 240.2,338.3 211.0,350.9 196.4,352.9 185.9,336.3 188.0,311.2 198.4,282.0 208.9,244.5 213.0,207.0 208.9,173.6" fill="#232323" filter="url(#b1)"/>
<polygon points="242.2,225.7 265.2,221.6 279.8,225.7 284.0,238.2 298.6,248.7 315.2,250.8 325.7,267.4 323.6,290.4 306.9,298.7 281.9,302.9 256.8,311.2 231.8,323.7 211.0,332.1 192.2,323.7 189.3,317.5 200.5,302.9 219.3,277.9 231.8,248.7 236.0,232.0" fill="#3e3e3e" filter="url(#b1)"/>
<polygon points="246.4,241.2 265.2,243.7 275.6,261.2 288.1,273.7 284.0,286.2 269.4,294.6 250.6,300.8 233.9,309.1 215.1,319.6 202.6,317.5 208.9,302.9 223.5,286.2 233.9,265.4 241.0,248.7" fill="#585a5a" filter="url(#b1)"/>
<polygon points="245.2,249.5 256.8,257.0 265.2,273.7 258.9,286.2 242.2,294.6 229.7,300.8 223.5,298.7 231.8,282.0 240.2,265.4" fill="#889090" filter="url(#b2)"/>
<polygon points="247.7,252.8 255.2,261.2 256.8,275.8 250.6,286.2 238.1,294.6 231.0,296.6 236.0,282.0 242.7,267.4" fill="#a0acac" fill-opacity=".8" filter="url(#b2)"/>
<g stroke="#fff" stroke-width="0.6"><line x1="250.6" y1="252.8" x2="248.2" y2="257.5" stroke-opacity="0.45"/><line x1="250.6" y1="252.8" x2="248.0" y2="249.3" stroke-opacity="0.45"/><line x1="250.6" y1="252.8" x2="243.2" y2="251.2" stroke-opacity="0.45"/><line x1="250.6" y1="252.8" x2="259.1" y2="256.1" stroke-opacity="0.45"/><line x1="250.6" y1="252.8" x2="258.6" y2="254.8" stroke-opacity="0.45"/><line x1="250.6" y1="252.8" x2="254.7" y2="254.8" stroke-opacity="0.45"/><line x1="250.6" y1="252.8" x2="239.4" y2="258.6" stroke-opacity="0.45"/><line x1="250.6" y1="252.8" x2="254.9" y2="257.1" stroke-opacity="0.45"/><line x1="250.6" y1="252.8" x2="241.0" y2="242.9" stroke-opacity="0.45"/><line x1="250.6" y1="252.8" x2="243.6" y2="249.2" stroke-opacity="0.45"/><line x1="250.6" y1="252.8" x2="254.6" y2="252.2" stroke-opacity="0.45"/><line x1="250.6" y1="252.8" x2="254.8" y2="247.6" stroke-opacity="0.45"/><line x1="250.6" y1="252.8" x2="253.6" y2="256.7" stroke-opacity="0.45"/><line x1="250.6" y1="252.8" x2="246.1" y2="264.4" stroke-opacity="0.45"/><line x1="250.6" y1="252.8" x2="254.8" y2="261.8" stroke-opacity="0.45"/><line x1="250.6" y1="252.8" x2="245.7" y2="247.0" stroke-opacity="0.45"/><line x1="284.0" y1="221.6" x2="280.8" y2="220.6" stroke-opacity="0.22"/><line x1="284.0" y1="221.6" x2="288.2" y2="223.2" stroke-opacity="0.22"/><line x1="284.0" y1="221.6" x2="281.2" y2="215.8" stroke-opacity="0.22"/><line x1="284.0" y1="221.6" x2="280.9" y2="228.7" stroke-opacity="0.22"/><line x1="284.0" y1="221.6" x2="278.9" y2="223.1" stroke-opacity="0.22"/><line x1="284.0" y1="221.6" x2="286.3" y2="213.2" stroke-opacity="0.22"/><line x1="284.0" y1="221.6" x2="284.2" y2="229.2" stroke-opacity="0.22"/><line x1="284.0" y1="221.6" x2="273.9" y2="220.0" stroke-opacity="0.22"/><line x1="284.0" y1="221.6" x2="283.3" y2="216.4" stroke-opacity="0.22"/><line x1="317.3" y1="252.8" x2="321.1" y2="252.4" stroke-opacity="0.18"/><line x1="317.3" y1="252.8" x2="309.3" y2="257.3" stroke-opacity="0.18"/><line x1="317.3" y1="252.8" x2="321.3" y2="258.5" stroke-opacity="0.18"/><line x1="317.3" y1="252.8" x2="325.5" y2="254.9" stroke-opacity="0.18"/><line x1="317.3" y1="252.8" x2="318.0" y2="245.3" stroke-opacity="0.18"/><line x1="317.3" y1="252.8" x2="321.2" y2="249.0" stroke-opacity="0.18"/><line x1="317.3" y1="252.8" x2="314.7" y2="245.5" stroke-opacity="0.18"/><line x1="317.3" y1="252.8" x2="311.5" y2="249.6" stroke-opacity="0.18"/><line x1="317.3" y1="252.8" x2="323.1" y2="243.8" stroke-opacity="0.18"/><line x1="382.0" y1="252.8" x2="373.7" y2="254.2" stroke-opacity="0.18"/><line x1="382.0" y1="252.8" x2="390.0" y2="256.1" stroke-opacity="0.18"/><line x1="382.0" y1="252.8" x2="375.3" y2="243.9" stroke-opacity="0.18"/><line x1="382.0" y1="252.8" x2="384.2" y2="248.2" stroke-opacity="0.18"/><line x1="382.0" y1="252.8" x2="375.6" y2="258.4" stroke-opacity="0.18"/><line x1="382.0" y1="252.8" x2="388.6" y2="253.8" stroke-opacity="0.18"/><line x1="382.0" y1="252.8" x2="383.8" y2="256.1" stroke-opacity="0.18"/><line x1="382.0" y1="252.8" x2="390.6" y2="256.2" stroke-opacity="0.18"/><line x1="213.0" y1="159.0" x2="217.4" y2="163.5" stroke-opacity="0.14"/><line x1="213.0" y1="159.0" x2="203.0" y2="167.2" stroke-opacity="0.14"/><line x1="213.0" y1="159.0" x2="220.4" y2="163.1" stroke-opacity="0.14"/><line x1="213.0" y1="159.0" x2="200.5" y2="155.0" stroke-opacity="0.14"/><line x1="213.0" y1="159.0" x2="218.5" y2="147.3" stroke-opacity="0.14"/><line x1="213.0" y1="159.0" x2="211.6" y2="166.9" stroke-opacity="0.14"/><line x1="213.0" y1="159.0" x2="204.7" y2="169.2" stroke-opacity="0.14"/><line x1="213.0" y1="159.0" x2="218.1" y2="157.6" stroke-opacity="0.14"/><line x1="213.0" y1="159.0" x2="215.8" y2="164.5" stroke-opacity="0.14"/><line x1="213.0" y1="159.0" x2="214.0" y2="167.8" stroke-opacity="0.14"/><line x1="215.1" y1="317.5" x2="210.9" y2="314.8" stroke-opacity="0.25"/><line x1="215.1" y1="317.5" x2="221.4" y2="317.7" stroke-opacity="0.25"/><line x1="215.1" y1="317.5" x2="210.0" y2="323.0" stroke-opacity="0.25"/><line x1="215.1" y1="317.5" x2="223.4" y2="315.0" stroke-opacity="0.25"/><line x1="215.1" y1="317.5" x2="207.2" y2="316.7" stroke-opacity="0.25"/><line x1="215.1" y1="317.5" x2="213.7" y2="314.6" stroke-opacity="0.25"/><line x1="215.1" y1="317.5" x2="222.7" y2="312.0" stroke-opacity="0.25"/><line x1="215.1" y1="317.5" x2="221.8" y2="310.8" stroke-opacity="0.25"/><line x1="215.1" y1="317.5" x2="210.3" y2="321.3" stroke-opacity="0.25"/><line x1="190.1" y1="317.5" x2="196.6" y2="322.4" stroke-opacity="0.22"/><line x1="190.1" y1="317.5" x2="193.2" y2="318.8" stroke-opacity="0.22"/><line x1="190.1" y1="317.5" x2="191.2" y2="321.5" stroke-opacity="0.22"/><line x1="190.1" y1="317.5" x2="188.4" y2="320.2" stroke-opacity="0.22"/><line x1="190.1" y1="317.5" x2="194.2" y2="317.5" stroke-opacity="0.22"/><line x1="190.1" y1="317.5" x2="194.8" y2="321.0" stroke-opacity="0.22"/><line x1="190.1" y1="317.5" x2="200.1" y2="319.1" stroke-opacity="0.22"/><line x1="190.1" y1="317.5" x2="187.1" y2="314.8" stroke-opacity="0.22"/><line x1="190.1" y1="317.5" x2="190.0" y2="323.2" stroke-opacity="0.22"/><line x1="361.1" y1="302.9" x2="359.3" y2="305.0" stroke-opacity="0.08"/><line x1="361.1" y1="302.9" x2="365.8" y2="296.4" stroke-opacity="0.08"/><line x1="361.1" y1="302.9" x2="356.3" y2="303.9" stroke-opacity="0.08"/><line x1="361.1" y1="302.9" x2="363.4" y2="304.2" stroke-opacity="0.08"/><line x1="361.1" y1="302.9" x2="359.1" y2="305.9" stroke-opacity="0.08"/><line x1="419.5" y1="286.2" x2="420.9" y2="283.6" stroke-opacity="0.07"/><line x1="419.5" y1="286.2" x2="427.1" y2="287.3" stroke-opacity="0.07"/><line x1="419.5" y1="286.2" x2="416.7" y2="285.7" stroke-opacity="0.07"/><line x1="419.5" y1="286.2" x2="417.4" y2="285.6" stroke-opacity="0.07"/><line x1="419.5" y1="286.2" x2="411.8" y2="284.8" stroke-opacity="0.07"/><line x1="223.5" y1="104.8" x2="227.5" y2="100.1" stroke-opacity="0.06"/><line x1="223.5" y1="104.8" x2="223.2" y2="109.0" stroke-opacity="0.06"/><line x1="223.5" y1="104.8" x2="226.8" y2="110.5" stroke-opacity="0.06"/><line x1="223.5" y1="104.8" x2="216.9" y2="103.4" stroke-opacity="0.06"/><line x1="223.5" y1="104.8" x2="221.9" y2="107.7" stroke-opacity="0.06"/><line x1="250.6" y1="282.0" x2="256.0" y2="268.9" stroke-opacity="0.35"/><line x1="250.6" y1="282.0" x2="258.0" y2="272.2" stroke-opacity="0.35"/><line x1="250.6" y1="282.0" x2="255.4" y2="271.5" stroke-opacity="0.35"/><line x1="250.6" y1="282.0" x2="251.9" y2="291.1" stroke-opacity="0.35"/><line x1="250.6" y1="282.0" x2="248.2" y2="285.1" stroke-opacity="0.35"/><line x1="250.6" y1="282.0" x2="257.1" y2="283.2" stroke-opacity="0.35"/><line x1="250.6" y1="282.0" x2="249.9" y2="293.1" stroke-opacity="0.35"/><line x1="250.6" y1="282.0" x2="258.7" y2="279.8" stroke-opacity="0.35"/><line x1="250.6" y1="282.0" x2="263.8" y2="276.5" stroke-opacity="0.35"/><line x1="250.6" y1="282.0" x2="257.8" y2="279.9" stroke-opacity="0.35"/><line x1="250.6" y1="282.0" x2="251.7" y2="288.0" stroke-opacity="0.35"/><line x1="250.6" y1="282.0" x2="252.5" y2="287.5" stroke-opacity="0.35"/><line x1="250.6" y1="282.0" x2="241.1" y2="272.7" stroke-opacity="0.35"/><line x1="250.6" y1="282.0" x2="255.3" y2="274.6" stroke-opacity="0.35"/><line x1="269.4" y1="269.5" x2="263.9" y2="261.7" stroke-opacity="0.20"/><line x1="269.4" y1="269.5" x2="276.5" y2="273.8" stroke-opacity="0.20"/><line x1="269.4" y1="269.5" x2="277.3" y2="264.5" stroke-opacity="0.20"/><line x1="269.4" y1="269.5" x2="269.4" y2="262.7" stroke-opacity="0.20"/><line x1="269.4" y1="269.5" x2="273.4" y2="278.0" stroke-opacity="0.20"/><line x1="269.4" y1="269.5" x2="264.6" y2="277.8" stroke-opacity="0.20"/><line x1="269.4" y1="269.5" x2="275.4" y2="268.4" stroke-opacity="0.20"/><line x1="269.4" y1="269.5" x2="260.6" y2="275.8" stroke-opacity="0.20"/><line x1="135.9" y1="378.0" x2="135.3" y2="374.4" stroke-opacity="0.06"/><line x1="135.9" y1="378.0" x2="138.3" y2="380.5" stroke-opacity="0.06"/><line x1="135.9" y1="378.0" x2="142.7" y2="373.4" stroke-opacity="0.06"/><line x1="135.9" y1="378.0" x2="141.0" y2="384.6" stroke-opacity="0.06"/><line x1="135.9" y1="378.0" x2="143.0" y2="377.1" stroke-opacity="0.06"/><line x1="244.3" y1="269.5" x2="238.1" y2="278.1" stroke-opacity="0.30"/><line x1="244.3" y1="269.5" x2="247.2" y2="272.6" stroke-opacity="0.30"/><line x1="244.3" y1="269.5" x2="255.9" y2="267.4" stroke-opacity="0.30"/><line x1="244.3" y1="269.5" x2="229.3" y2="267.0" stroke-opacity="0.30"/><line x1="244.3" y1="269.5" x2="231.1" y2="275.4" stroke-opacity="0.30"/><line x1="244.3" y1="269.5" x2="247.3" y2="263.7" stroke-opacity="0.30"/><line x1="244.3" y1="269.5" x2="244.2" y2="277.0" stroke-opacity="0.30"/><line x1="244.3" y1="269.5" x2="245.0" y2="280.5" stroke-opacity="0.30"/><line x1="244.3" y1="269.5" x2="243.8" y2="278.5" stroke-opacity="0.30"/><line x1="244.3" y1="269.5" x2="254.5" y2="280.5" stroke-opacity="0.30"/><line x1="244.3" y1="269.5" x2="238.6" y2="277.1" stroke-opacity="0.30"/><line x1="244.3" y1="269.5" x2="231.5" y2="262.1" stroke-opacity="0.30"/><line x1="240.2" y1="294.6" x2="228.3" y2="301.0" stroke-opacity="0.30"/><line x1="240.2" y1="294.6" x2="230.8" y2="294.5" stroke-opacity="0.30"/><line x1="240.2" y1="294.6" x2="236.4" y2="294.0" stroke-opacity="0.30"/><line x1="240.2" y1="294.6" x2="235.0" y2="296.6" stroke-opacity="0.30"/><line x1="240.2" y1="294.6" x2="252.4" y2="294.9" stroke-opacity="0.30"/><line x1="240.2" y1="294.6" x2="244.2" y2="302.2" stroke-opacity="0.30"/><line x1="240.2" y1="294.6" x2="238.7" y2="285.1" stroke-opacity="0.30"/><line x1="240.2" y1="294.6" x2="235.9" y2="302.7" stroke-opacity="0.30"/><line x1="240.2" y1="294.6" x2="228.8" y2="290.4" stroke-opacity="0.30"/><line x1="240.2" y1="294.6" x2="247.7" y2="300.5" stroke-opacity="0.30"/><line x1="227.6" y1="302.9" x2="227.7" y2="308.8" stroke-opacity="0.25"/><line x1="227.6" y1="302.9" x2="228.8" y2="294.9" stroke-opacity="0.25"/><line x1="227.6" y1="302.9" x2="217.9" y2="298.9" stroke-opacity="0.25"/><line x1="227.6" y1="302.9" x2="234.0" y2="299.0" stroke-opacity="0.25"/><line x1="227.6" y1="302.9" x2="221.5" y2="297.7" stroke-opacity="0.25"/><line x1="227.6" y1="302.9" x2="217.8" y2="302.1" stroke-opacity="0.25"/><line x1="227.6" y1="302.9" x2="219.7" y2="305.3" stroke-opacity="0.25"/><line x1="227.6" y1="302.9" x2="215.5" y2="304.6" stroke-opacity="0.25"/><line x1="227.6" y1="302.9" x2="224.0" y2="291.9" stroke-opacity="0.25"/><line x1="227.6" y1="302.9" x2="233.0" y2="300.9" stroke-opacity="0.25"/><line x1="261.0" y1="286.2" x2="249.6" y2="281.7" stroke-opacity="0.20"/><line x1="261.0" y1="286.2" x2="263.4" y2="282.4" stroke-opacity="0.20"/><line x1="261.0" y1="286.2" x2="266.4" y2="291.4" stroke-opacity="0.20"/><line x1="261.0" y1="286.2" x2="266.0" y2="288.6" stroke-opacity="0.20"/><line x1="261.0" y1="286.2" x2="269.6" y2="290.5" stroke-opacity="0.20"/><line x1="261.0" y1="286.2" x2="263.5" y2="274.7" stroke-opacity="0.20"/><line x1="261.0" y1="286.2" x2="266.7" y2="294.5" stroke-opacity="0.20"/><line x1="261.0" y1="286.2" x2="258.6" y2="282.3" stroke-opacity="0.20"/><line x1="277.7" y1="277.9" x2="285.8" y2="270.5" stroke-opacity="0.15"/><line x1="277.7" y1="277.9" x2="279.7" y2="288.5" stroke-opacity="0.15"/><line x1="277.7" y1="277.9" x2="272.2" y2="282.0" stroke-opacity="0.15"/><line x1="277.7" y1="277.9" x2="287.5" y2="277.2" stroke-opacity="0.15"/><line x1="277.7" y1="277.9" x2="281.1" y2="283.3" stroke-opacity="0.15"/><line x1="277.7" y1="277.9" x2="272.1" y2="277.3" stroke-opacity="0.15"/><line x1="298.6" y1="265.4" x2="300.1" y2="269.8" stroke-opacity="0.12"/><line x1="298.6" y1="265.4" x2="298.1" y2="262.9" stroke-opacity="0.12"/><line x1="298.6" y1="265.4" x2="293.3" y2="263.5" stroke-opacity="0.12"/><line x1="298.6" y1="265.4" x2="303.3" y2="265.9" stroke-opacity="0.12"/><line x1="298.6" y1="265.4" x2="294.2" y2="261.1" stroke-opacity="0.12"/><line x1="298.6" y1="265.4" x2="307.3" y2="269.1" stroke-opacity="0.12"/><line x1="236.0" y1="261.2" x2="239.0" y2="249.0" stroke-opacity="0.20"/><line x1="236.0" y1="261.2" x2="240.5" y2="264.7" stroke-opacity="0.20"/><line x1="236.0" y1="261.2" x2="246.3" y2="263.8" stroke-opacity="0.20"/><line x1="236.0" y1="261.2" x2="235.4" y2="265.6" stroke-opacity="0.20"/><line x1="236.0" y1="261.2" x2="225.4" y2="266.8" stroke-opacity="0.20"/><line x1="236.0" y1="261.2" x2="238.4" y2="256.0" stroke-opacity="0.20"/><line x1="236.0" y1="261.2" x2="243.1" y2="270.9" stroke-opacity="0.20"/><line x1="236.0" y1="261.2" x2="227.0" y2="256.9" stroke-opacity="0.20"/></g>
<polyline points="356.9,248.7 369.5,249.5 382.0,252.8" fill="none" stroke="#fff" stroke-opacity=".3" stroke-width=".7"/>
<polyline points="250.6,250.8 252.7,265.4 248.5,282.0 236.0,294.6 227.6,302.9" fill="none" stroke="#ffffff" stroke-width="1.8" stroke-opacity=".35" stroke-linejoin="round" filter="url(#b3)"/>
<polyline points="250.6,250.8 252.7,265.4 248.5,282.0 236.0,294.6 227.6,302.9" fill="none" stroke="#ffffff" stroke-width=".7" stroke-opacity=".9"/>
<polyline points="252.7,265.4 258.9,275.8 263.1,290.4" fill="none" stroke="#ffffff" stroke-opacity=".7" stroke-width=".8"/>
</svg>
</div>
<div style="left:4px;top:713px;width:200px;height:17px;border:1px solid;border-color:#808080 #fff #fff #808080"></div>
<div style="left:206px;top:713px;width:750px;height:17px;border:1px solid;border-color:#808080 #fff #fff #808080"></div>
<div class="m" style="left:208px;top:715px;transform:scaleX(.87)">Current: (6, 55, 0,00)</div>
<svg style="position:absolute;left:942px;top:716px" width="13" height="13" viewBox="0 0 13 13" shape-rendering="crispEdges">
<g stroke-width="1"><path d="M12 1L1 12M12 5L5 12M12 9L9 12" stroke="#fff" /><path d="M12 2L2 12M12 3L3 12M12 6L6 12M12 7L7 12M12 10L10 12M12 11L11 12" stroke="#808080"/></g></svg>
<div style="left:240px;top:42px;width:180px;height:345px;background:#c0c0c0;border:1px solid;border-color:#c0c0c0 #000 #000 #c0c0c0;box-shadow:inset 1px 1px 0 #fff, inset -1px -1px 0 #808080"></div>
<div style="left:244px;top:258px;width:172px;height:1px;background:#808080"></div>
<div style="left:244px;top:259px;width:172px;height:1px;background:#fff"></div>
<div style="left:244px;top:323px;width:172px;height:1px;background:#808080"></div>
<div style="left:244px;top:324px;width:172px;height:1px;background:#fff"></div>
<div class="m" style="left:265px;top:48px"><u>H</u>elligkeit / Kontrast</div>
<div class="m" style="left:265px;top:67px">H<u>e</u>lligkeit / Kontrast - Auto</div>
<div class="m" style="left:265px;top:86px;transform:scaleX(0.8508)"><u>G</u>amma</div>
<div class="m" style="left:265px;top:105px;transform:scaleX(0.8706)"><u>M</u>odifizieren</div>
<div class="m" style="left:265px;top:124px"><u>I</u>nvertieren</div>
<div class="m" style="left:265px;top:143px;transform:scaleX(0.8621)"><u>D</u>igitalisieren</div>
<div class="m" style="left:265px;top:162px;transform:scaleX(0.8818)"><u>T</u>errassieren</div>
<div class="m" style="left:265px;top:181px;transform:scaleX(0.8588)"><u>K</u>raterisieren</div>
<div class="m" style="left:265px;top:200px;transform:scaleX(0.8440)"><u>F</u>IR-Filter</div>
<div class="m" style="left:265px;top:219px">Te<u>s</u>tFilter</div>
<div style="left:243px;top:235px;width:174px;height:19px;background:#000080"></div>
<div class="m mw" style="left:265px;top:238px;transform:scaleX(0.8719)"><u>W</u>eitere Filter</div>
<svg style="position:absolute;left:407px;top:240px" width="4" height="7" viewBox="0 0 4 7" shape-rendering="crispEdges"><path d="M0 0h1v1h1v1h1v1h1v1h-1v1h-1v1h-1v1h-1z" fill="#fff"/></svg>
<div class="m" style="left:265px;top:265px;transform:scaleX(0.8630)"><u>B</u>ildgröße</div>
<div class="m" style="left:265px;top:284px;transform:scaleX(0.8670)">Bi<u>l</u>d erweitern</div>
<div class="m" style="left:265px;top:303px">Bild <u>v</u>erschieben</div>
<div class="m" style="left:265px;top:330px">D<u>r</u>ehen</div>
<svg style="position:absolute;left:407px;top:332px" width="4" height="7" viewBox="0 0 4 7" shape-rendering="crispEdges"><path d="M0 0h1v1h1v1h1v1h1v1h-1v1h-1v1h-1v1h-1z" fill="#000"/></svg>
<div class="m" style="left:265px;top:349px">S<u>p</u>iegeln</div>
<svg style="position:absolute;left:407px;top:351px" width="4" height="7" viewBox="0 0 4 7" shape-rendering="crispEdges"><path d="M0 0h1v1h1v1h1v1h1v1h-1v1h-1v1h-1v1h-1z" fill="#000"/></svg>
<div class="m" style="left:265px;top:368px;transform:scaleX(0.8691)">Tr<u>a</u>nsformieren</div>
<svg style="position:absolute;left:407px;top:370px" width="4" height="7" viewBox="0 0 4 7" shape-rendering="crispEdges"><path d="M0 0h1v1h1v1h1v1h1v1h-1v1h-1v1h-1v1h-1z" fill="#000"/></svg>
<div style="left:414px;top:232px;width:124px;height:82px;background:#c0c0c0;border:1px solid;border-color:#c0c0c0 #000 #000 #c0c0c0;box-shadow:inset 1px 1px 0 #fff, inset -1px -1px 0 #808080"></div>
<div style="left:417px;top:235px;width:118px;height:19px;background:#000080"></div>
<div class="m mw" style="left:439px;top:238px"><u>S</u>charf</div>
<div class="m" style="left:439px;top:257px;transform:scaleX(0.9453)"><u>W</u>eich</div>
<div class="m" style="left:439px;top:276px;transform:scaleX(0.8656)"><u>E</u>rosion</div>
<div class="m mr" style="left:444px;width:80px;top:276px">Strg+R</div>
<div class="m" style="left:439px;top:295px"><u>D</u>ilation</div>
<div class="m mr" style="left:444px;width:80px;top:295px">Strg+I</div>
</body></html>
